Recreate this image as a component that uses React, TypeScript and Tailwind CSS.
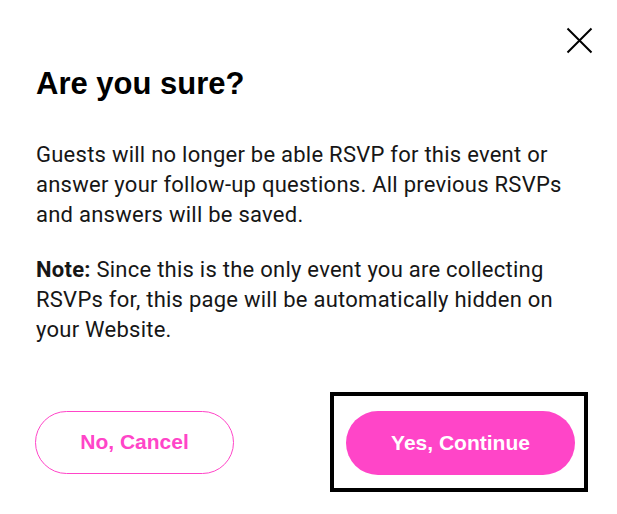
export default function App() {
  return (
    <div className="relative w-[617px] h-[514px] bg-white text-[#111]">
      <button className="absolute top-[27px] right-[24px] text-black" aria-label="Close">
        <svg width="27" height="27" viewBox="0 0 27 27" fill="none" stroke="currentColor" strokeWidth="2">
          <path d="M1.5 1.5 L25.5 25.5 M25.5 1.5 L1.5 25.5" />
        </svg>
      </button>

      <div className="pl-[36px] pt-[66px]">
        <h2 className="font-['Liberation_Sans',Arial,sans-serif] font-bold text-[31px] leading-[36px] text-black">
          Are you sure?
        </h2>

        <div className="mt-[38px] w-[545px] font-['Roboto',sans-serif] text-[22px] leading-[30px] tracking-[0.25px] text-[#161616]">
          <p className="mb-[25px]">
            Guests will no longer be able RSVP for this event or answer your follow-up questions. All previous RSVPs
            and answers will be saved.
          </p>
          <p>
            <span className="font-bold">Note:</span> Since this is the only event you are collecting RSVPs for, this
            page will be automatically hidden on your Website.
          </p>
        </div>
      </div>

      <div className="mt-[47px] pl-[35px] pr-[29px] flex items-center justify-between font-['Liberation_Sans',Arial,sans-serif]">
        <button className="w-[199px] h-[63px] rounded-full border border-[#ff45c8] text-[#ff45c8] font-bold text-[21px]">
          No, Cancel
        </button>
        <div className="border-[4px] border-black pl-[12px] pr-[9px] pt-[15px] pb-[13px]">
          <button className="w-[229px] h-[64px] rounded-full bg-[#ff45c8] text-white font-bold text-[21px]">
            Yes, Continue
          </button>
        </div>
      </div>
    </div>
  );
}
